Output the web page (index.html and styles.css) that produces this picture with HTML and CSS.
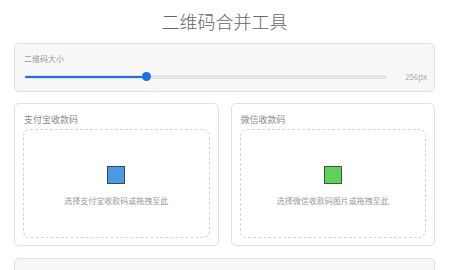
FILE: index.html
```html
<!DOCTYPE html>
<html lang="zh-CN">
<head>
    <meta charset="UTF-8">
    <meta name="viewport" content="width=device-width, initial-scale=1.0">
    <title>二维码合并工具</title>
    <link rel="stylesheet" href="styles.css">
</head>
<body>
    <h1>二维码合并工具</h1>

    <div class="panel size-panel">
        <label for="qrSize">二维码大小</label>
        <div class="slider-row">
            <input type="range" id="qrSize" min="128" max="512" value="256">
            <span id="sizeValue">256px</span>
        </div>
    </div>

    <div class="upload-grid">
        <div class="card">
            <div class="card-title">支付宝收款码</div>
            <div class="drop-zone">
                <span class="qr-icon alipay"></span>
                <p>选择支付宝收款码或拖拽至此</p>
            </div>
        </div>
        <div class="card">
            <div class="card-title">微信收款码</div>
            <div class="drop-zone">
                <span class="qr-icon wechat"></span>
                <p>选择微信收款码图片或拖拽至此</p>
            </div>
        </div>
    </div>

    <div class="panel preview-panel">
        <div class="card-title">合并后预览图片</div>
    </div>

    <script>
        const slider = document.getElementById('qrSize');
        const sizeValue = document.getElementById('sizeValue');

        function updateSlider() {
            const pct = (slider.value - slider.min) / (slider.max - slider.min) * 100;
            slider.style.setProperty('--fill', pct + '%');
            sizeValue.textContent = slider.value + 'px';
        }

        slider.addEventListener('input', updateSlider);
        updateSlider();
    </script>
</body>
</html>
```

FILE: styles.css
```css
* {
    box-sizing: border-box;
}

body {
    font-family: "Noto Sans CJK SC", "Noto Sans", sans-serif;
    margin: 0;
    padding: 0 15px 0 14px;
    background-color: #ffffff;
    color: #666;
}

h1 {
    text-align: center;
    font-size: 18px;
    font-weight: 300;
    color: #666;
    margin: 0;
    padding: 9px 0 10px;
    line-height: 24px;
}

.panel {
    background-color: #f7f7f7;
    border: 1px solid #e0e0e0;
    border-radius: 5px;
}

.size-panel {
    height: 49px;
    padding: 9px 7px 0 9px;
}

.size-panel label {
    display: block;
    font-size: 8px;
    line-height: 12px;
    color: #999;
}

.slider-row {
    display: flex;
    align-items: center;
    gap: 13px;
    margin-top: 6px;
}

.slider-row span {
    font-size: 8px;
    color: #aaa;
    width: 28px;
    text-align: right;
}

input[type="range"] {
    -webkit-appearance: none;
    appearance: none;
    flex: 1;
    height: 4px;
    margin: 0;
    border-radius: 2px;
    border: 1px solid #e2e2e2;
    background: linear-gradient(to right, #1f6fe0 var(--fill), #e6e6e6 var(--fill));
}

input[type="range"]::-webkit-slider-thumb {
    -webkit-appearance: none;
    width: 9px;
    height: 9px;
    border-radius: 50%;
    background: #1f6fe0;
    border: none;
}

.upload-grid {
    display: grid;
    grid-template-columns: 1fr 1fr;
    gap: 12px;
    margin-top: 11px;
}

.card {
    height: 143px;
    border: 1px solid #e0e0e0;
    border-radius: 5px;
    background-color: #ffffff;
    padding: 9px 8px 7px 8px;
    display: flex;
    flex-direction: column;
}

.card-title {
    font-size: 9px;
    line-height: 14px;
    color: #888;
    margin-left: 1px;
}

.drop-zone {
    flex: 1;
    margin-top: 2px;
    border: 1px dashed #d4d4d4;
    border-radius: 7px;
    display: flex;
    flex-direction: column;
    align-items: center;
    justify-content: center;
    gap: 11px;
    padding-top: 4px;
}

.qr-icon {
    width: 18px;
    height: 18px;
    border: 1px solid #3b4a5a;
}

.alipay {
    background-color: #4a9be3;
}

.wechat {
    background-color: #5fd05a;
    border-color: #3d5a3a;
}

.drop-zone p {
    margin: 0;
    font-size: 8px;
    color: #999;
}

.preview-panel {
    margin-top: 12px;
    height: 60px;
    padding: 9px 9px;
}
```
